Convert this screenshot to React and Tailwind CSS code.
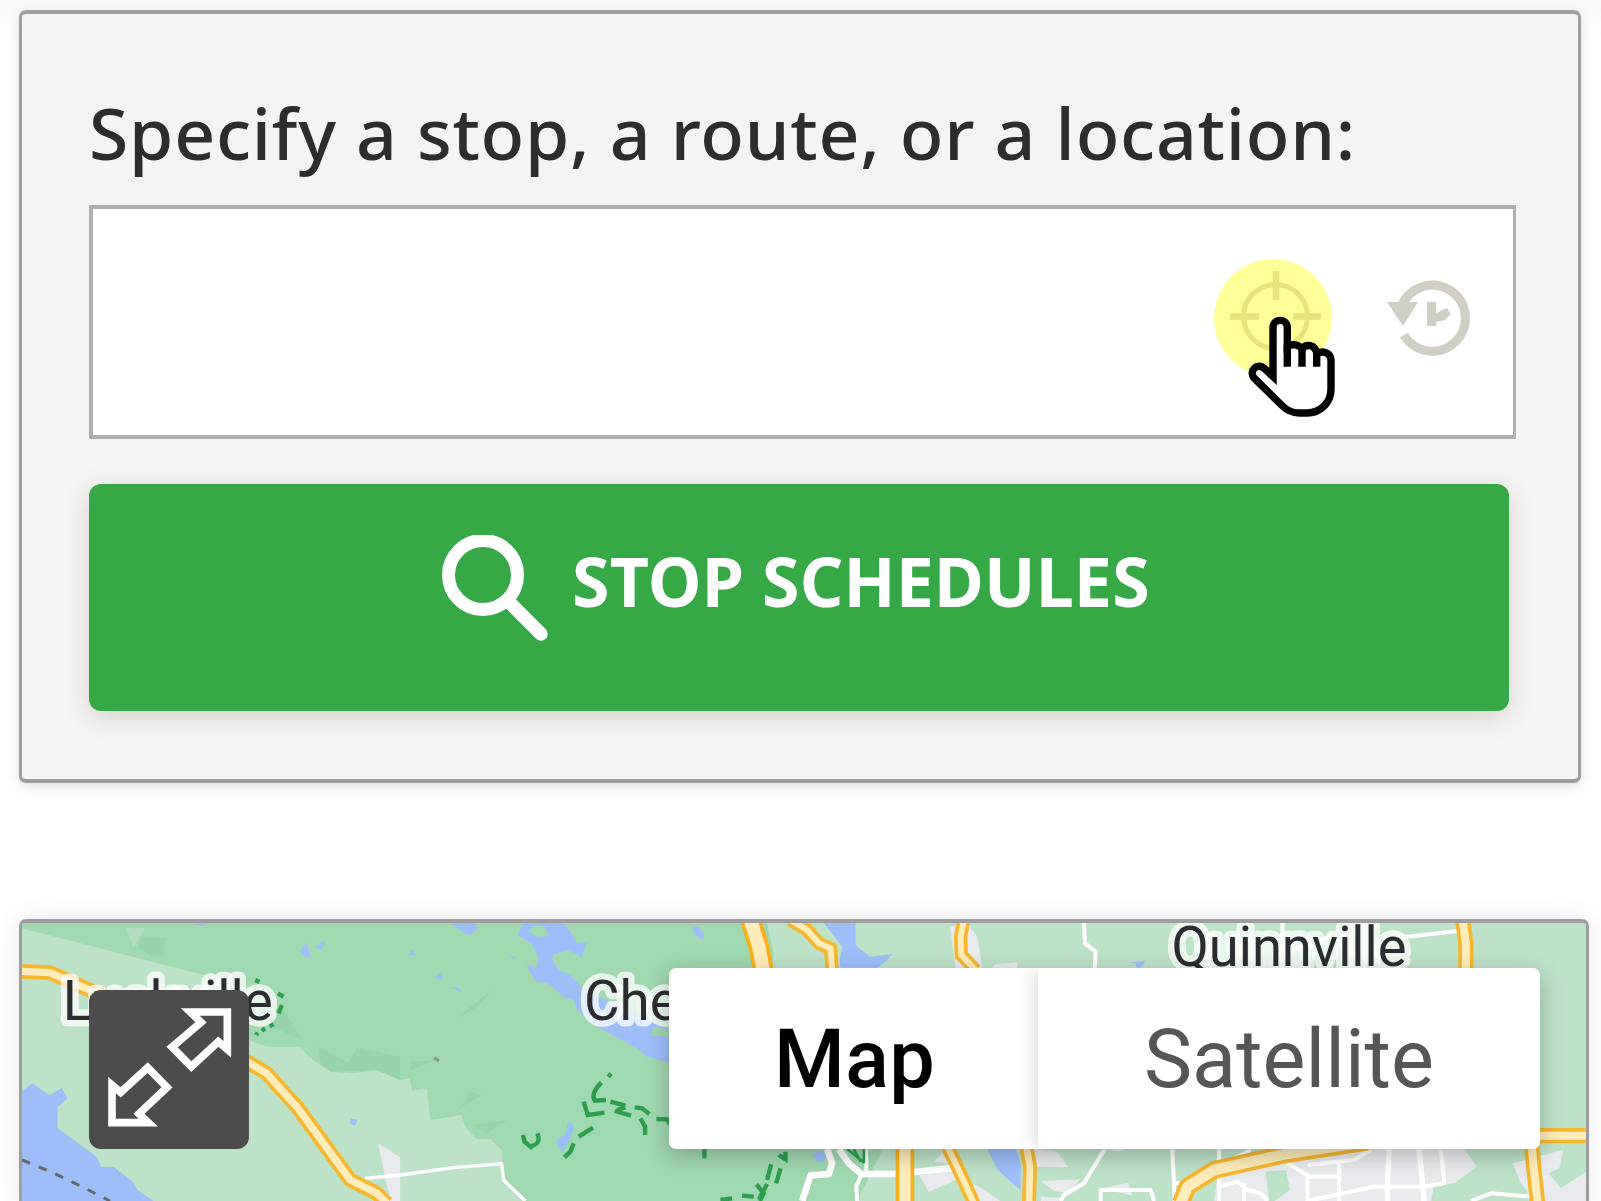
const GREEN = '#a0d8af';
const LIGHT = '#bce2c8';
const WATER = '#9dbff9';
const GREY = '#e8eaed';

function Road({ d, w = 30, edge = '#f8b62d' }) {
  return (
    <g fill="none" strokeLinejoin="round">
      <path d={d} stroke={edge} strokeWidth={w + 16} />
      <path d={d} stroke="#ffecbd" strokeWidth={w - 6} />
    </g>
  );
}

function MapTiles() {
  return (
    <svg className="block h-full w-full" viewBox="66 69 4689 834" preserveAspectRatio="none">
      <rect x="66" y="69" width="4689" height="834" fill={LIGHT} />
      <path
        fill={GREEN}
        d="M66 69H2300L2330 105L2310 220L2650 740L2570 903H1575L1510 840L1504 750L1470 716L1430 718L1395 680L1383 645L1290 660L1280 565L1235 572L1228 535L1200 540L1130 510L1060 520L990 515L945 485L895 440H800L745 420V260L600 222L66 85Z"
      />
      <path fill={LIGHT} d="M2300 69H2520V210H2330Z" />
      <g fill="#99d1a8">
        <path d="M425 115L498 112L490 165L460 170L415 145Z" />
        <path d="M845 325L908 420L790 370Z" />
        <path d="M955 440L1045 490L1070 445L1200 470V540L1130 510L990 515L960 485Z" />
        <path d="M1475 270L1425 325L1370 353Z" />
        <path d="M1228 485L1305 480L1230 510Z" />
        <path d="M1378 625L1410 575L1445 585Z" />
        <path d="M1420 675L1520 660L1460 700Z" />
      </g>
      <path fill={LIGHT} d="M378 84H435L400 143Z" opacity=".6" />
      <g fill={WATER}>
        <path d="M66 573L97 550L148 586L185 563L202 595L173 622V685L290 770L303 800H340L398 845L412 870L460 903H66Z" />
        <path d="M585 69H635L600 78Z" />
        <path d="M898 152L920 127L930 170L915 172Z" />
        <path d="M945 138L976 122L963 152Z" />
        <path d="M1050 655L1072 660L1065 677L1050 672Z" />
        <path d="M1350 69H1425L1432 85L1412 104L1390 98Z" />
        <path d="M1225 165L1235 147L1248 167Z" />
        <path d="M1305 232L1325 215L1323 242Z" />
        <path d="M1350 260L1375 262L1383 277Z" />
        <path d="M1520 165L1545 172V180Z" />
        <path d="M1568 69H1690L1712 95L1730 130L1760 125L1745 172L1705 150L1660 162L1655 178L1675 210L1710 225L1745 265L2010 390V491L1935 467L1910 445L1790 380L1730 330L1720 300L1690 292L1645 250L1607 245L1577 193L1608 203L1615 175L1595 132L1552 105Z" />
        <path d="M2075 75L2100 85L2112 107L2103 120L2080 103Z" />
        <path d="M2470 69H2565V135L2608 170L2675 162L2655 185L2630 203H2520L2517 180L2525 140Z" />
        <path d="M1703 665L1722 675L1712 710L1687 755L1670 735L1673 715L1695 705Z" />
        <path d="M2960 747H3047L3060 790V870L3030 845L2990 808Z" />
        <path d="M2435 765L2460 750L2480 765L2470 785L2450 787Z" />
        <path d="M3380 188L3435 182L3420 203H3408L3405 190Z" />
      </g>
      <path fill={GREEN} d="M1585 92L1605 75L1635 80L1645 108L1610 110Z" />
      <path fill={GREEN} d="M1950 405L1960 380L2005 390V410Z" />
      <g fill={GREY}>
        <path d="M2848 80L2900 69L2930 110L2945 203H2865Z" />
        <path d="M2975 203L2985 193L3048 187L3052 203Z" />
        <path d="M1133 730L1200 772V903H1170Z" />
        <path d="M2755 825L2870 812L2865 840L2785 876Z" />
        <path d="M2800 785L2835 747L2850 790Z" />
        <path d="M2900 845L2935 860L3000 903H2920Z" />
        <path d="M3100 747L3170 755L3202 802L3110 800Z" />
        <path d="M3120 843L3240 838L3200 880L3160 873Z" />
        <path d="M3120 890L3185 893V903H3120Z" />
        <path d="M3305 865L3382 848L3395 887Z" />
        <path d="M3320 747H3380L3350 755Z" />
        <path d="M3650 830L4000 747H4390L4427 800L4360 850L4300 857L4290 903H3640Z" />
        <path d="M4535 790L4740 735L4755 745V903H4590L4575 870L4560 850Z" />
      </g>
      <path fill={LIGHT} d="M3795 815L3855 810L3868 870L3820 903H3805ZM4690 735H4755V815L4680 865L4643 820L4675 805ZM3640 747H3760L3650 780Z" />
      <g fill="none" stroke="#fff" strokeWidth="12" strokeLinejoin="round">
        <path d="M1095 835L1200 825L1360 803L1504 791L1510 840L1575 903" strokeWidth="10" />
        <path d="M3250 69L3253 130L3285 155L3282 210" />
        <path d="M3845 69V160L3990 110" />
        <path d="M4180 115L4370 93" />
        <path d="M2480 747L2495 790L2485 822L2430 826L2405 903" strokeWidth="20" />
        <path d="M2515 747L2545 790L2583 822H2680L2870 803" strokeWidth="20" />
        <path d="M2597 747V820M2583 822L2567 860L2570 903" />
        <path d="M3312 747L3250 850L3190 885L3180 903" />
        <path d="M3515 747L3522 903M3522 850H3560" />
        <path d="M3300 903V870H3450L3460 903" />
        <path d="M3655 747V903M3690 780L3750 750M3655 860L3710 845L3740 870L3780 880L3800 903M3730 850V903" />
        <path d="M3860 790L3920 825V903M3920 795L4060 780L4110 750M3920 830H4020M4015 790V903M3920 903L4120 860H4270L4330 850L4320 750" />
        <path d="M4165 747L4160 840V903M4255 747L4270 903" strokeWidth="16" />
        <path d="M4410 903L4470 880L4590 890" />
      </g>
      <g fill="none" stroke="#2f9e4c" strokeWidth="13">
        <path d="M1568 705L1573 725L1597 745M1611 700Q1625 735 1587 739" />
        <path d="M1803 548Q1770 580 1783 602L1817 600M1823 522L1833 530" />
        <path d="M1750 605L1762 645L1812 638" />
        <path d="M1830 605L1875 617M1843 633L1892 647M1850 630L1875 622M1735 710L1778 683M1720 730L1710 755L1692 772" />
        <path d="M1903 622L1925 625L1947 642M1920 655L1934 680V705M1968 657L2000 658L2010 675M2112 745V775" />
        <path d="M2335 765L2355 778V755M2312 793L2300 840M2340 805L2327 850M2160 900L2195 895M2225 887L2260 890M2268 853L2290 880L2278 903M2300 852L2275 898" />
        <path d="M2540 747L2590 787M2560 747L2580 785M2590 747V790" strokeWidth="8" />
        <path d="M765 240L778 246M833 280L850 290M845 315L835 340M820 372L808 379M795 385L785 392M772 398L768 405" />
      </g>
      <path d="M66 780L135 808L190 833L250 862L330 903" fill="none" stroke="#63676c" strokeWidth="9" strokeDasharray="26 28" />
      <path d="M1302 473L1316 483" stroke="#7f9c88" strokeWidth="9" />
      <Road d="M66 214L150 218L200 240L280 275L500 370L740 485L800 520L835 560L890 620L1050 840L1130 880L1160 910" w={28} />
      <Road d="M2250 60L2275 140L2292 230" w={46} edge="#fbae17" />
      <Road d="M2370 60L2420 90L2455 130L2490 145L2495 210" w={24} />
      <Road d="M2890 60L2880 110L2882 165L2925 210" w={24} />
      <Road d="M2713 740V910" w={40} edge="#fbae17" />
      <Road d="M2840 740L2865 790L2920 910" w={24} />
      <Road d="M3077 740L3088 800L3085 910" w={26} />
      <Road d="M4385 60L4395 130V210" w={30} />
      <Road d="M3540 910L3560 860L3640 810L3850 763L4100 725" w={38} />
      <Road d="M4600 707H4760" w={30} />
      <Road d="M4592 735L4598 800L4610 910" w={30} />
      <g
        fontFamily="Roboto, sans-serif"
        fontSize="164"
        fill="#2b2d30"
        stroke="#ffffff"
        strokeOpacity=".75"
        strokeWidth="38"
        strokeLinejoin="round"
        style={{ paintOrder: 'stroke' }}
      >
        <text x="188" y="359" textLength="630" lengthAdjust="spacingAndGlyphs">Luckville</text>
        <text x="1751" y="359">Chepachet</text>
        <text x="3512" y="197" textLength="705" lengthAdjust="spacingAndGlyphs">Quinnville</text>
      </g>
    </svg>
  );
}

function TargetIcon() {
  return (
    <svg className="h-[118px] w-[118px]" viewBox="0 0 118 118">
      <circle cx="59" cy="59" r="59" fill="#ffff99" />
      <g fill="none" stroke="#e6e57b">
        <circle cx="61.500" cy="57.500" r="32" strokeWidth="5" />
        <path d="M62 12V41M62 74V103M16 57.500H45M79 57.500H107" strokeWidth="6.500" />
      </g>
    </svg>
  );
}

function HandCursor() {
  return (
    <svg className="absolute left-[1155px] top-[106px] h-[104px] w-[92px]" viewBox="0 0 92 104">
      <path
        d="M25 61.500V12.500a7.150 7.150 0 0 1 14.300 0V31.500C44 28.500 51 29.500 54 34C58 28.500 67 29 69 39C73 35.500 83 36 83 46V74C83 88 72 98 59 98H51C44 98 38.500 95 34 90.500L6 63C0.500 56 9 46.500 17 54Z"
        fill="#fff"
        stroke="#000"
        strokeWidth="7.400"
        strokeLinejoin="miter"
      />
      <path d="M39.300 30V51.700M54 33V51.700M68.700 37V51.700" stroke="#000" strokeWidth="7.400" fill="none" />
    </svg>
  );
}

function HistoryIcon() {
  return (
    <svg className="h-[76px] w-[84px]" viewBox="0 0 84 76">
      <path d="M14 28A33 33 0 1 1 17 55" fill="none" stroke="#d1cec5" strokeWidth="9" />
      <path d="M0 22H31L16 46Z" fill="#d1cec5" />
      <path d="M40 22H49V33L60 28L64 34L58 40L49 42V46H40Z" fill="#d1cec5" />
    </svg>
  );
}

function SearchIcon() {
  return (
    <svg className="h-[107px] w-[106px]" viewBox="0 0 106 107">
      <circle cx="41" cy="40" r="34.500" fill="none" stroke="#fff" strokeWidth="13" />
      <path d="M66 66L99 99" stroke="#fff" strokeWidth="13.500" strokeLinecap="round" />
    </svg>
  );
}

function ExpandIcon() {
  return (
    <svg className="h-full w-full" viewBox="267 270 480 477">
      <g fill="none" stroke="#fff" strokeWidth="23">
        <path d="M571 336H682V448L655 425L574 500L516 441L603 367Z" />
        <path d="M336 555V668H445L417 641L501 562L443 503L362 577Z" />
      </g>
    </svg>
  );
}

export default function App() {
  return (
    <div className="h-[1201px] w-[1601px] overflow-hidden bg-linear-to-b from-[#f8f8f8] to-white to-[42px] pl-[19px] pt-[10px]">
      <section className="h-[773px] w-[1562px] rounded-[7px] border-x-3 border-y-4 border-[#9e9e9e] bg-[#f4f4f4] pl-[67px] shadow-[0_4px_14px_rgba(0,0,0,0.12)]">
        <label className="block h-[191px] whitespace-nowrap pt-[70px] font-['Noto_Sans'] text-[71.500px] font-medium leading-[97px] tracking-[0.75px] text-[#2d2d2d]">
          Specify a stop, a route, or a location:
        </label>
        <div className="relative flex h-[234px] w-[1427px] items-center border-y-4 border-l-4 border-r-3 border-[#afafaf] bg-white">
          <div className="-mt-[8px] ml-[1121px]">
            <TargetIcon />
          </div>
          <div className="-mt-[8px] ml-[55px]">
            <HistoryIcon />
          </div>
          <HandCursor />
        </div>
        <button className="mt-[45px] flex h-[227px] w-[1420px] rounded-[12px] bg-[#36a846] pl-[353px] shadow-[0_6px_26px_rgba(100,80,60,0.2)]">
          <span className="mt-[51px]">
            <SearchIcon />
          </span>
          <span className="ml-[24px] mt-[49px] whitespace-nowrap font-['Noto_Sans'] text-[68px] font-bold leading-[96px] tracking-[0.2px] text-white">
            STOP SCHEDULES
          </span>
        </button>
      </section>
      <section className="relative mt-[136px] h-[290px] w-[1570px] overflow-hidden rounded-[7px] border-x-3 border-y-4 border-[#9e9e9e] shadow-[0_0_28px_rgba(0,0,0,0.09)]">
        <div className="h-[278px]">
          <MapTiles />
        </div>
        <button className="absolute left-[67px] top-[67px] h-[159px] w-[160px] rounded-[12px] bg-[#4c4c4c]">
          <ExpandIcon />
        </button>
        <div className="absolute left-[647px] top-[45px] flex h-[181px] w-[871px] overflow-hidden rounded-[7px] bg-white font-['Roboto'] text-[81px] leading-[95px] shadow-[0_6px_22px_rgba(0,0,0,0.25)]">
          <button className="flex w-[369px] justify-center pl-[2px] pt-[44px] font-medium tracking-[0.3px] text-black">Map</button>
          <button className="flex w-[502px] justify-center pt-[44px] text-[#565656] shadow-[0_0_20px_rgba(0,0,0,0.2)]">Satellite</button>
        </div>
      </section>
    </div>
  );
}
